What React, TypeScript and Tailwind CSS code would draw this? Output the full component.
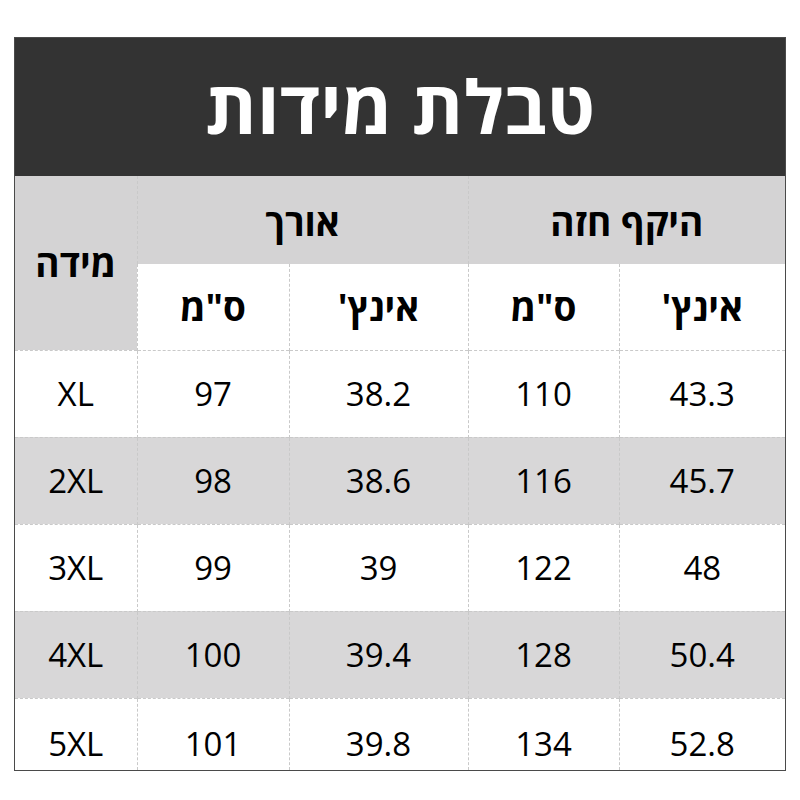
const rows = [
  { size: "XL", lenCm: "97", lenIn: "38.2", chestCm: "110", chestIn: "43.3" },
  { size: "2XL", lenCm: "98", lenIn: "38.6", chestCm: "116", chestIn: "45.7" },
  { size: "3XL", lenCm: "99", lenIn: "39", chestCm: "122", chestIn: "48" },
  { size: "4XL", lenCm: "100", lenIn: "39.4", chestCm: "128", chestIn: "50.4" },
  { size: "5XL", lenCm: "101", lenIn: "39.8", chestCm: "134", chestIn: "52.8" },
];

const font = { fontFamily: '"Open Sans", "DejaVu Sans", sans-serif' };

export default function App() {
  return (
    <div className="w-[800px] h-[800px] bg-white pt-[37px] pl-[14px]" style={font}>
      <div className="w-[772px] border border-[#4a4a4a] bg-white">
        <div className="h-[138px] bg-[#333333] flex items-center justify-center">
          <span dir="rtl" className="text-white font-bold text-[74px] leading-none pb-[2px]">
            טבלת מידות
          </span>
        </div>
        <table className="w-full border-collapse table-fixed text-black">
          <colgroup>
            <col className="w-[122px]" />
            <col className="w-[152px]" />
            <col className="w-[179px]" />
            <col className="w-[151px]" />
            <col />
          </colgroup>
          <thead>
            <tr className="h-[88px] bg-[#d4d3d4]">
              <th
                rowSpan={2}
                dir="rtl"
                className="font-bold text-[37px] border-r border-dashed border-[#c9c9c9] align-middle"
              >
                מידה
              </th>
              <th
                colSpan={2}
                dir="rtl"
                className="font-bold text-[37px] border-r border-dashed border-[#c9c9c9] pt-[4px]"
              >
                אורך
              </th>
              <th colSpan={2} dir="rtl" className="font-bold text-[37px] pt-[4px]">
                היקף חזה
              </th>
            </tr>
            <tr className="h-[86px] bg-white">
              <th dir="rtl" className="font-bold text-[37px] border-r border-dashed border-[#c9c9c9]">
                ס"מ
              </th>
              <th dir="rtl" className="font-bold text-[37px] border-r border-dashed border-[#c9c9c9]">
                אינץ'
              </th>
              <th dir="rtl" className="font-bold text-[37px] border-r border-dashed border-[#c9c9c9]">
                ס"מ
              </th>
              <th dir="rtl" className="font-bold text-[37px]">
                אינץ'
              </th>
            </tr>
          </thead>
          <tbody>
            {rows.map((r, i) => (
              <tr
                key={r.size}
                className={
                  (i % 2 === 1 ? "bg-[#d8d7d8] " : "bg-white ") +
                  (i === rows.length - 1 ? "h-[72px]" : "h-[87px]")
                }
              >
                {[r.size, r.lenCm, r.lenIn, r.chestCm, r.chestIn].map((v, j) => (
                  <td
                    key={j}
                    className={
                      "text-center text-[33px] border-t border-dashed border-[#c9c9c9] " +
                      (j < 4 ? "border-r " : "") +
                      (i === rows.length - 1 ? "pt-[18px]" : "")
                    }
                  >
                    {v}
                  </td>
                ))}
              </tr>
            ))}
          </tbody>
        </table>
      </div>
    </div>
  );
}
